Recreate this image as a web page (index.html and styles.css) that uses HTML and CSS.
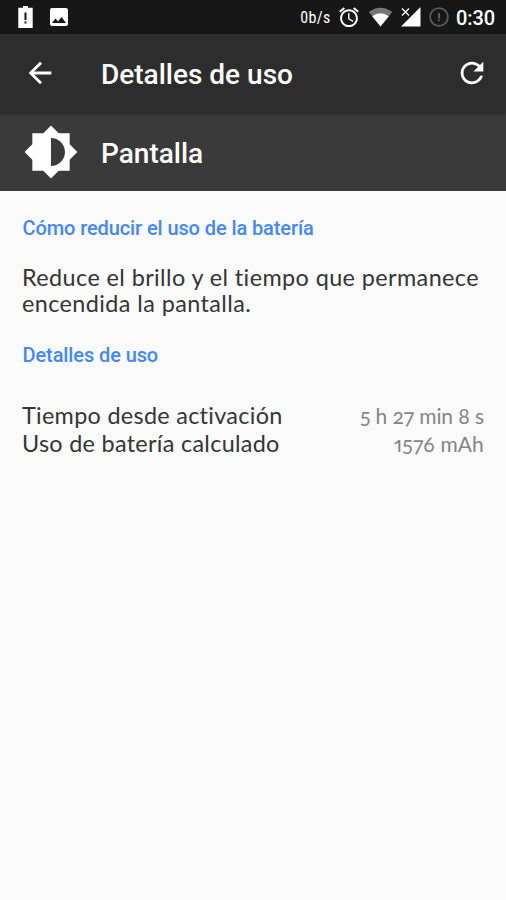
FILE: index.html
```html
<!DOCTYPE html>
<html lang="es">
<head>
<meta charset="utf-8">
<title>Detalles de uso</title>
<link rel="stylesheet" href="styles.css">
</head>
<body>
<div class="status">
  <svg class="battery" viewBox="0 0 15 22"><path fill="#fff" d="M5 0h5v1.700h4.700V22H.3V1.700H5z"/><path fill="#171717" d="M6.500 6.500h2v7.500h-2zM6.500 15.500h2v2h-2z"/></svg>
  <svg class="photo" viewBox="3 3 18 18"><path fill="#fff" d="M21 19V5c0-1.100-.9-2-2-2H5c-1.100 0-2 .9-2 2v14c0 1.100.9 2 2 2h14c1.100 0 2-.9 2-2zM8.500 13.500l2.500 3.010L14.500 12l4.500 6H5l3.500-4.500z"/></svg>
  <span class="rate">0b/s</span>
  <svg class="alarm" viewBox="2 1.700 20 20.300"><path fill="#fff" d="M22 5.720l-4.600-3.860-1.290 1.530 4.600 3.860L22 5.720zM7.880 3.390L6.600 1.860 2 5.710l1.290 1.530 4.590-3.850zM12.500 8H11v6l4.750 2.850.75-1.230-4-2.370V8zM12 4c-4.970 0-9 4.030-9 9s4.020 9 9 9 9-4.030 9-9-4.030-9-9-9zm0 16c-3.870 0-7-3.130-7-7s3.130-7 7-7 7 3.130 7 7-3.130 7-7 7z"/></svg>
  <svg class="wifi" viewBox="0 0 26 21"><path fill="#777" d="M13 20.500.7 5.200Q13-3.800 25.300 5.200z"/><path fill="#fff" d="M13 20.500 4.300 9.700Q13 3.500 21.700 9.700z"/></svg>
  <svg class="signal" viewBox="0 0 20 20"><path fill="#fff" d="M19.500 0v19.500H0L8.500 11z"/><path d="M0 0h10v10H0z" fill="#171717"/><path d="m1 1.500 7 7m0-7-7 7" stroke="#fff" stroke-width="1.300"/></svg>
  <svg class="alert" viewBox="0 0 20 20"><circle cx="10" cy="10" r="8.900" fill="none" stroke="#5c5c5c" stroke-width="1.800"/><path fill="#666" d="M9.100 6h1.800v5.500H9.100zM9.100 12.500h1.800v1.800H9.100z"/></svg>
  <span class="clock">0:30</span>
</div>
<header class="appbar">
  <svg class="back" viewBox="0 0 24 24"><path fill="#fff" d="M20 11H7.830l5.590-5.590L12 4l-8 8 8 8 1.410-1.410L7.830 13H20v-2z"/></svg>
  <h1>Detalles de uso</h1>
  <svg class="refresh" viewBox="0 0 24 24"><path fill="#fff" d="M17.650 6.350C16.200 4.900 14.210 4 12 4c-4.420 0-7.990 3.580-7.990 8s3.570 8 7.990 8c3.730 0 6.840-2.550 7.730-6h-2.080c-.82 2.330-3.040 4-5.650 4-3.310 0-6-2.690-6-6s2.690-6 6-6c1.660 0 3.140.69 4.220 1.780L13 11h7V4l-2.350 2.350z"/></svg>
</header>
<section class="subject">
  <svg class="brightness" viewBox="0 0 24 24"><path fill="#fff" d="M20 15.310L23.310 12 20 8.690V4h-4.690L12 .69 8.690 4H4v4.690L.69 12 4 15.310V20h4.690L12 23.310 15.310 20H20v-4.690zM12 18V6c3.310 0 6 2.690 6 6s-2.690 6-6 6z"/></svg>
  <h2>Pantalla</h2>
</section>
<main>
  <h3>Cómo reducir el uso de la batería</h3>
  <p class="advice">Reduce el brillo y el tiempo que permanece<br>encendida la pantalla.</p>
  <h3>Detalles de uso</h3>
  <dl>
    <div class="row"><dt>Tiempo desde activación</dt><dd>5 h 27 min 8 s</dd></div>
    <div class="row"><dt>Uso de batería calculado</dt><dd class="charge">1576 mAh</dd></div>
  </dl>
</main>
</body>
</html>
```
FILE: styles.css
```css
* { box-sizing: border-box; margin: 0; padding: 0; }
body { width: 506px; height: 900px; overflow: hidden; background: #fafafa; font-family: Roboto, sans-serif; white-space: nowrap; }
svg { display: block; flex: none; }
.status { display: flex; align-items: center; height: 34px; padding: 0 11px 0 18px; background: #171717; color: #fff; }
.battery { width: 15px; height: 22px; }
.photo { width: 18px; height: 18px; margin-left: 17px; }
.rate { margin-left: auto; font: 400 16px/34px "Roboto Condensed", Roboto, sans-serif; letter-spacing: .3px; padding-top: 1px; }
.alarm { width: 20px; height: 20px; margin-left: 8px; }
.wifi { width: 25px; height: 20px; margin-left: 9px; }
.signal { width: 20px; height: 20px; margin-left: 8px; }
.alert { width: 20px; height: 20px; margin-left: 8px; }
.clock { margin-left: 7.500px; font-size: 20px; font-weight: 500; line-height: 34px; letter-spacing: -.1px; padding-top: 1px; }
.appbar { position: relative; display: flex; align-items: center; height: 79px; padding: 0 17px 0 23px; background: #2d2d2d; color: #fff; box-shadow: 0 1px 3px rgba(0,0,0,.3); }
.back, .refresh { width: 34px; height: 34px; margin-top: -1px; }
.refresh { margin-left: auto; }
h1, h2 { font-size: 28px; font-weight: 500; line-height: 34px; }
h1 { margin-left: 44px; padding-top: 2px; }
.subject { display: flex; align-items: center; height: 78px; padding-left: 22.500px; background: #3a3a3a; color: #fff; }
.brightness { width: 56px; height: 56px; }
h2 { margin-left: 22.500px; padding-top: 3px; }
main { padding: 25px 22px 0; }
h3 { font-size: 20px; font-weight: 500; line-height: 24px; letter-spacing: -.1px; color: #4387fa; padding-left: .5px; }
.advice { margin: 24px 0 27px; font: 400 23.400px/26px Lato, sans-serif; font-variant-ligatures: none; letter-spacing: .41px; color: #353535; }
dl { margin-top: 35px; font-family: Lato, sans-serif; }
.row { display: flex; justify-content: space-between; align-items: baseline; height: 28px; line-height: 27px; }
dt { font-size: 23.400px; font-variant-ligatures: none; letter-spacing: .3px; color: #353535; }
dd { font-size: 21px; font-variant-numeric: oldstyle-nums proportional-nums; letter-spacing: -.1px; color: #858585; }
.charge { letter-spacing: .15px; }
```
